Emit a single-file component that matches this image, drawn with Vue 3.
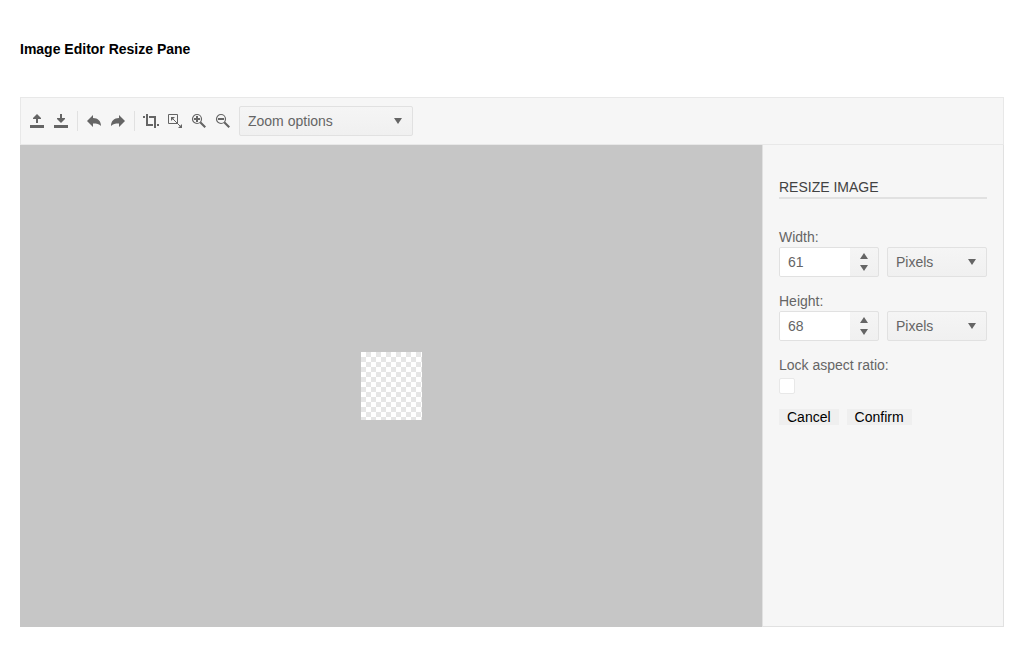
<script setup>
import { ref } from 'vue'

const width = ref('61')
const height = ref('68')
const widthUnit = ref('Pixels')
const heightUnit = ref('Pixels')
const lockRatio = ref(false)
const zoom = ref('Zoom options')

const fields = [
  { id: 'width', label: 'Width:', value: width, unit: widthUnit },
  { id: 'height', label: 'Height:', value: height, unit: heightUnit },
]

function step(field, delta) {
  field.value.value = String(Math.max(1, Number(field.value.value) + delta))
}
</script>

<template>
  <main class="page">
    <h1 class="heading">Image Editor Resize Pane</h1>
    <section class="editor">
      <div class="toolbar" role="toolbar" aria-label="Image tools">
        <button class="tool" type="button" aria-label="Open image">
          <svg class="icon" viewBox="0 0 16 16"><path d="M1 12h14v3H1zM8 1l4 4v1H9v4H7V6H4V5z" /></svg>
        </button>
        <button class="tool" type="button" aria-label="Save image">
          <svg class="icon" viewBox="0 0 16 16"><path d="M1 12h14v3H1zM7 1h2v4h3v1l-4 4-4-4V5h3z" /></svg>
        </button>
        <span class="separator"></span>
        <button class="tool" type="button" aria-label="Undo">
          <svg class="icon" viewBox="0 0 16 16"><path d="M1 8l6-6v3c5 0 8 3 8 8-2-2-4-2.500-8-2.500V14z" /></svg>
        </button>
        <button class="tool" type="button" aria-label="Redo">
          <svg class="icon" viewBox="0 0 16 16"><path d="M15 8L9 2v3c-5 0-8 3-8 8 2-2 4-2.500 8-2.500V14z" /></svg>
        </button>
        <span class="separator"></span>
        <button class="tool" type="button" aria-label="Crop">
          <svg class="icon" viewBox="0 0 16 16"><path d="M0 3h2v2H0zM3 1h2v10h5v2H3zM6 3h7v12h-2V5H6zM14 11h2v2h-2z" /></svg>
        </button>
        <button class="tool" type="button" aria-label="Resize">
          <svg class="icon" viewBox="0 0 16 16">
            <path class="line" d="M1.500 1.500h9v9h-9zM5 5l9 9" />
            <path d="M4 4h4L4 8zM15 11v4h-4z" />
          </svg>
        </button>
        <button class="tool" type="button" aria-label="Zoom in">
          <svg class="icon" viewBox="0 0 16 16">
            <circle class="line ring" cx="6" cy="6" r="4.500" />
            <path d="M5 3h2v2h2v2H7v2H5V7H3V5h2zM8.500 10L10 8.500l5 5-1.500 1.500z" />
          </svg>
        </button>
        <button class="tool" type="button" aria-label="Zoom out">
          <svg class="icon" viewBox="0 0 16 16">
            <circle class="line ring" cx="6" cy="6" r="4.500" />
            <path d="M3 5h6v2H3zM8.500 10L10 8.500l5 5-1.500 1.500z" />
          </svg>
        </button>
        <div class="picker zoom-picker">
          <select v-model="zoom" aria-label="Zoom options">
            <option>Zoom options</option>
            <option>Actual size</option>
            <option>Fit to screen</option>
          </select>
          <svg class="arrow" viewBox="0 0 8 6"><path d="M0 0h8L4 6z" /></svg>
        </div>
      </div>

      <div class="workspace">
        <div class="canvas">
          <div class="image" role="img" aria-label="Transparent image"></div>
        </div>
        <form class="pane" @submit.prevent>
          <h2 class="pane-title">RESIZE IMAGE</h2>
          <div v-for="field in fields" :key="field.id" class="field">
            <label :for="field.id">{{ field.label }}</label>
            <div class="row">
              <div class="number">
                <input :id="field.id" v-model="field.value.value" type="text" inputmode="numeric" />
                <div class="spinner">
                  <button type="button" aria-label="Increase" @click="step(field, 1)">
                    <svg class="arrow" viewBox="0 0 8 6"><path d="M0 6h8L4 0z" /></svg>
                  </button>
                  <button type="button" aria-label="Decrease" @click="step(field, -1)">
                    <svg class="arrow" viewBox="0 0 8 6"><path d="M0 0h8L4 6z" /></svg>
                  </button>
                </div>
              </div>
              <div class="picker">
                <select v-model="field.unit.value" :aria-label="field.label + ' unit'">
                  <option>Pixels</option>
                  <option>Percents</option>
                </select>
                <svg class="arrow" viewBox="0 0 8 6"><path d="M0 0h8L4 6z" /></svg>
              </div>
            </div>
          </div>
          <div class="lock">
            <label for="lock">Lock aspect ratio:</label>
            <input id="lock" v-model="lockRatio" type="checkbox" />
          </div>
          <div class="actions">
            <button type="button">Cancel</button>
            <button type="submit">Confirm</button>
          </div>
        </form>
      </div>
    </section>
  </main>
</template>

<style>
body {
  margin: 0;
  background: #fff;
}
</style>

<style scoped>
* {
  box-sizing: border-box;
}
.page {
  display: flex;
  flex-direction: column;
  min-height: 100vh;
  padding: 39px 20px 20px;
  font: 14px/20px "Liberation Sans", Arial, sans-serif;
  color: #656565;
}
button,
input,
select {
  margin: 0;
  font: inherit;
  color: inherit;
}
.heading {
  margin: 0 0 38px;
  font-size: 14px;
  line-height: 20px;
  color: #000;
}
.editor {
  display: flex;
  flex: 1;
  flex-direction: column;
}
.toolbar {
  display: flex;
  align-items: center;
  padding: 8px 4px;
  border: 1px solid #e8e8e8;
  background: #f6f6f6;
}
.tool {
  display: grid;
  place-items: center;
  width: 24px;
  height: 24px;
  padding: 0;
  border: 0;
  background: none;
}
.icon {
  display: block;
  width: 16px;
  height: 16px;
  fill: #656565;
}
.line {
  fill: none;
  stroke: #656565;
}
.ring {
  stroke-width: 1.2;
}
.separator {
  width: 1px;
  height: 20px;
  margin: 0 4px;
  background: #e1e1e1;
}
.picker {
  display: grid;
  flex: 1;
  align-items: center;
  height: 30px;
  border: 1px solid #e1e1e1;
  border-radius: 2px;
  background: linear-gradient(#f5f5f5, #f0f0f0);
}
.zoom-picker {
  flex: none;
  width: 174px;
  margin-left: 4px;
}
.picker select {
  grid-area: 1 / 1;
  width: 100%;
  height: 28px;
  padding: 0 24px 0 8px;
  border: 0;
  background: none;
  appearance: none;
}
.arrow {
  display: block;
  width: 8px;
  height: 6px;
  fill: #656565;
}
.picker .arrow {
  grid-area: 1 / 1;
  justify-self: end;
  margin-right: 10px;
  pointer-events: none;
}
.workspace {
  display: flex;
  flex: 1;
}
.canvas {
  display: grid;
  flex: 1;
  place-items: center;
  background: #c6c6c6;
}
.image {
  width: 61px;
  height: 68px;
  background: repeating-conic-gradient(#e6e6e6 0 25%, #fff 0 50%) 0 0 / 10px 10px;
}
.pane {
  width: 242px;
  padding: 32px 16px;
  border: solid #e1e1e1;
  border-width: 0 1px 1px;
  background: #f6f6f6;
}
.pane-title {
  margin: 0 0 28px;
  border-bottom: 2px solid #e1e1e1;
  font-size: 14px;
  font-weight: 400;
  line-height: 20px;
  color: #424242;
}
.field {
  margin-bottom: 14px;
}
label {
  display: block;
}
.row {
  display: flex;
  gap: 8px;
}
.number {
  display: flex;
  flex: 1;
  height: 30px;
  overflow: hidden;
  border: 1px solid #e1e1e1;
  border-radius: 2px;
  background: linear-gradient(#f5f5f5, #f0f0f0);
}
.number input {
  flex: 1;
  min-width: 0;
  padding: 0 8px;
  border: 0;
  background: #fff;
}
.spinner {
  display: flex;
  flex-direction: column;
  width: 28px;
  padding: 2px 0;
}
.spinner button {
  display: grid;
  flex: 1;
  place-items: center;
  padding: 0;
  border: 0;
  background: none;
}
.lock input {
  display: block;
  width: 16px;
  height: 16px;
  margin-top: 3px;
  border: 1px solid #e8e8e8;
  border-radius: 2px;
  background: #fff;
  appearance: none;
}
.lock input:checked {
  background: #656565;
}
.actions {
  display: flex;
  gap: 8px;
  margin-top: 15px;
}
.actions button {
  padding: 0 8px;
  border: 0;
  background: #efefef;
  line-height: 16px;
  color: #000;
}
</style>
